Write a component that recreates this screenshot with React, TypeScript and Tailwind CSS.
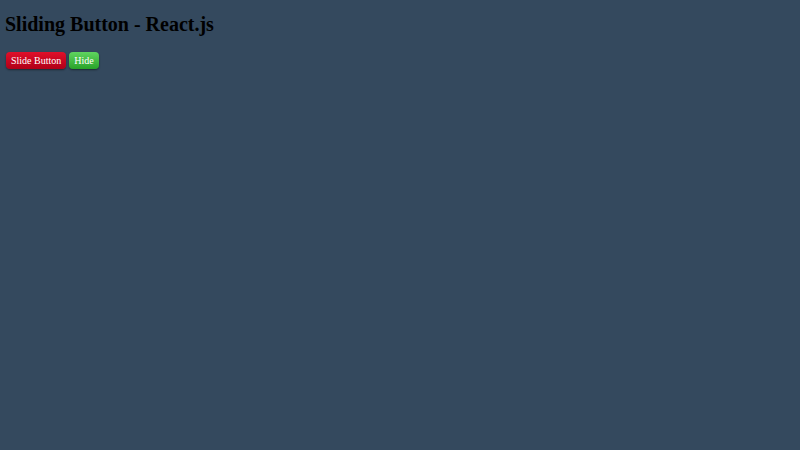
import React, { useState } from 'react';

const App: React.FC = () => {
  const [hidden, setHidden] = useState(false);

  return (
    <div className="min-h-screen w-full bg-[#34495e] px-[5px] pt-[11px] font-['Liberation_Serif',serif] text-black">
      <h1 className="text-[20px] font-bold leading-[26px]">Sliding Button - React.js</h1>
      <div className="mt-[15px] flex items-center gap-[3px]">
        {!hidden && (
          <button className="ml-[1px] h-[17px] rounded-[4px] bg-gradient-to-b from-[#e0102a] to-[#b00018] px-[5px] text-[10px] leading-[17px] text-white shadow-[0_1px_2px_rgba(0,0,0,0.45)]">
            Slide Button
          </button>
        )}
        <button
          onClick={() => setHidden(!hidden)}
          className="h-[17px] rounded-[4px] bg-gradient-to-b from-[#5fd45f] to-[#27a327] px-[5px] text-[10px] leading-[17px] text-white shadow-[0_1px_2px_rgba(0,0,0,0.45)]"
        >
          {hidden ? 'Show' : 'Hide'}
        </button>
      </div>
    </div>
  );
};

export default App;
